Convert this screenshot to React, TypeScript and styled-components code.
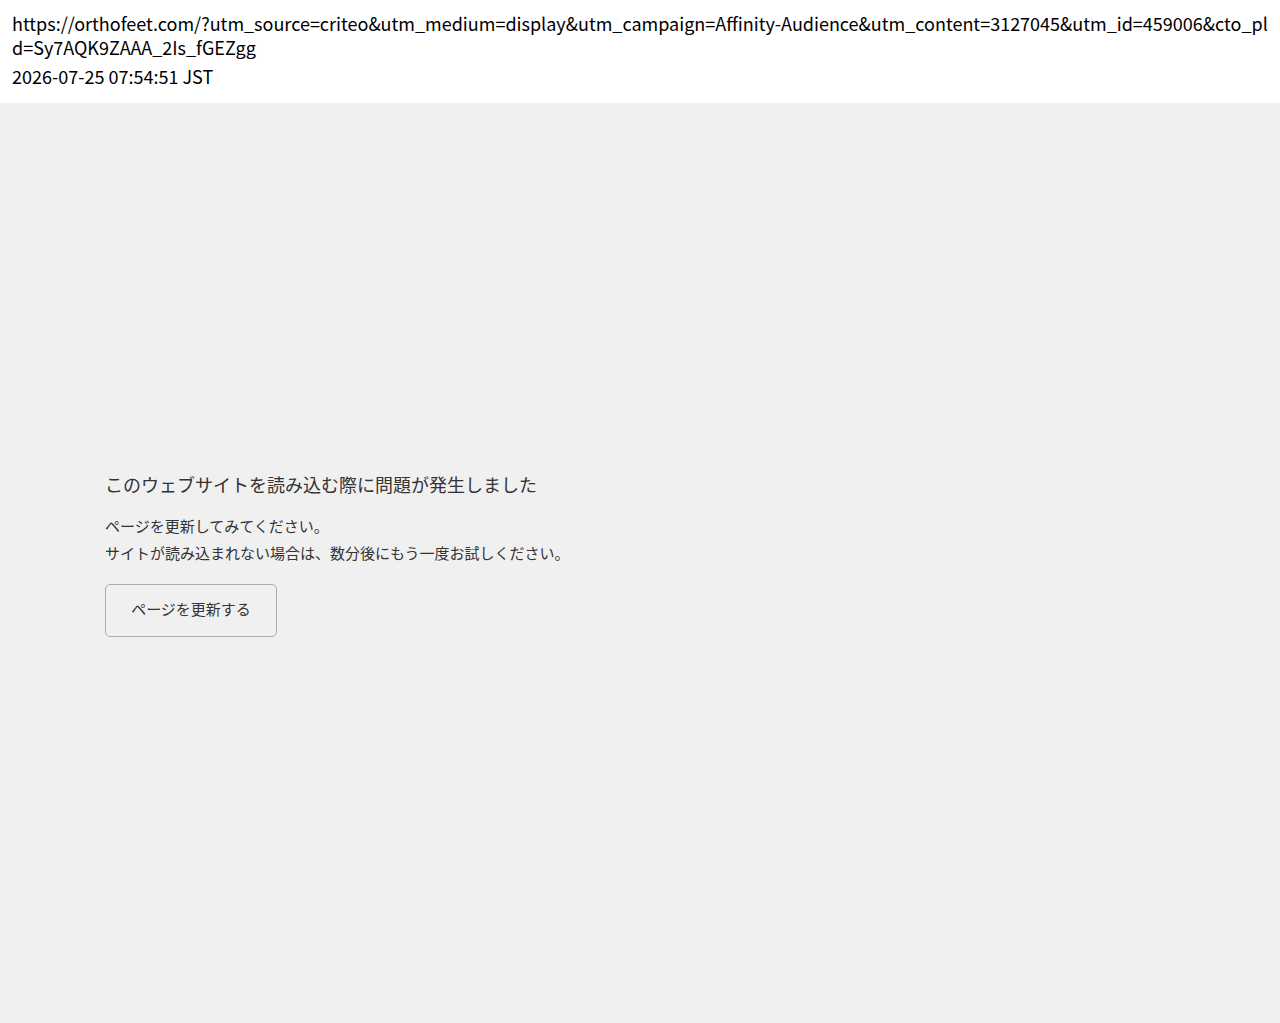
import React from "react";
import styled, { createGlobalStyle } from "styled-components";

const Global = createGlobalStyle`
  html, body { margin: 0; padding: 0; }
  body {
    font-family: "Noto Sans CJK JP", "Noto Sans", sans-serif;
    background: #f0f0f0;
  }
`;

const Page = styled.div`
  display: flex;
  flex-direction: column;
  min-height: 1023px;
`;

const Header = styled.header`
  background: #ffffff;
  padding: 11px 12px 10px;
  color: #000;
  font-size: 18px;
  height: 103px;
  box-sizing: border-box;
`;

const Url = styled.div`
  line-height: 24px;
  word-break: break-all;
`;

const Stamp = styled.div`
  line-height: 24px;
  margin-top: 5px;
`;

const Main = styled.main`
  flex: 1;
  display: flex;
  flex-direction: column;
  justify-content: center;
  padding: 0 105px 20px;
`;

const Title = styled.h1`
  margin: 0 0 14px;
  font-size: 18px;
  font-weight: 400;
  color: #333;
  line-height: 28px;
`;

const Body = styled.p`
  margin: 0;
  font-size: 15px;
  line-height: 27px;
  color: #333;
`;

const Button = styled.button`
  margin-top: 18px;
  width: 172px;
  height: 53px;
  padding: 0 0 3px;
  font-family: inherit;
  font-size: 15px;
  color: #333;
  background: #f0f0f0;
  border: 1px solid #ababab;
  border-radius: 5px;
  cursor: pointer;
`;

export default function App() {
  return (
    <Page>
      <Global />
      <Header>
        <Url>
          https://orthofeet.com/?utm_source=criteo&amp;utm_medium=display&amp;utm_campaign=Affinity-Audience&amp;utm_content=3127045&amp;utm_id=459006&amp;cto_pld=Sy7AQK9ZAAA_2Is_fGEZgg
        </Url>
        <Stamp>2026-07-25 07:54:51 JST</Stamp>
      </Header>
      <Main>
        <Title>このウェブサイトを読み込む際に問題が発生しました</Title>
        <Body>
          ページを更新してみてください。
          <br />
          サイトが読み込まれない場合は、数分後にもう一度お試しください。
        </Body>
        <div>
          <Button>ページを更新する</Button>
        </div>
      </Main>
    </Page>
  );
}
